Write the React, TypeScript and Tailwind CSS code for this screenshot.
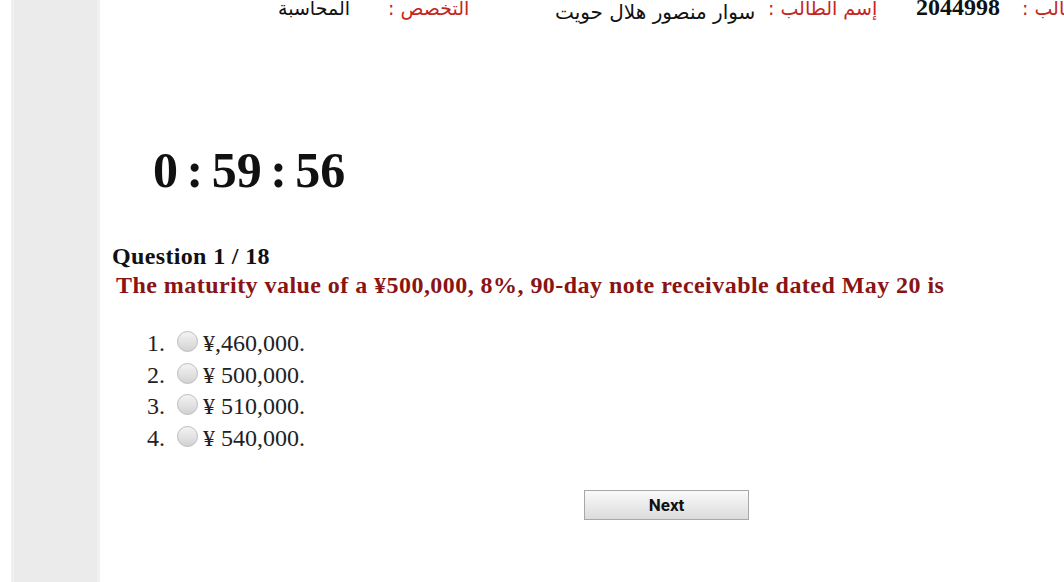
import React from "react";

const serif = "font-['Liberation_Serif','Times_New_Roman',serif]";
const arabic = "font-['DejaVu_Sans','Noto_Sans',sans-serif]";

const options = ["¥,460,000.", "¥ 500,000.", "¥ 510,000.", "¥ 540,000."];

function Radio() {
  return (
    <span className="mt-[3px] block h-[21px] w-[21px] shrink-0 rounded-full border border-[#bcbcbc] bg-linear-to-b from-[#f4f4f4] to-[#d2d2d2]" />
  );
}

export default function App() {
  return (
    <div className="flex h-[582px] w-[1064px] overflow-hidden bg-white">
      <div className="w-[11px] shrink-0 bg-white" />
      <div className="w-[89px] shrink-0 border-x-[3px] border-x-[#f0f0f0] bg-[#ebebeb]" />

      <main className="relative flex-1 overflow-hidden">
        {/* student info row */}
        <div
          dir="rtl"
          className="mr-[-136px] flex h-[30px] items-start whitespace-nowrap text-[20px] leading-none"
        >
          <div className={`w-[178px] shrink-0 text-left text-[19px] text-[#c3261d] ${arabic} -mt-[1px]`}>
            رقم الطالب :
          </div>
          <div className={`w-[106px] shrink-0 text-left text-[24px] font-bold text-[#111] ${serif} -mt-[5px]`}>
            2044998
          </div>
          <div className={`w-[148px] shrink-0 text-left text-[19px] text-[#c3261d] ${arabic} -mt-[1px]`}>
            إسم الطالب :
          </div>
          <div className={`w-[213px] shrink-0 text-left text-[#111] ${arabic} mt-[2px]`}>
            سوار منصور هلال حويت
          </div>
          <div className={`w-[167px] shrink-0 text-left text-[19px] text-[#c3261d] ${arabic} -mt-[1px]`}>
            التخصص :
          </div>
          <div className={`w-[110px] shrink-0 text-left text-[19px] text-[#111] ${arabic} -mt-[1px]`}>
            المحاسبة
          </div>
        </div>

        {/* countdown */}
        <div className={`mt-[115px] pl-[53px] text-[50px] font-bold leading-[50px] text-[#111] [word-spacing:-4px] ${serif}`}>
          0 : 59 : 56
        </div>

        {/* question */}
        <div className={`mt-[47px] ${serif}`}>
          <div className="pl-[12px] text-[24px] font-bold leading-[29px] tracking-[0.35px] text-[#111]">
            Question 1 / 18
          </div>
          <div className="pl-[16px] text-[24px] font-bold leading-[29px] tracking-[0.45px] text-[#8a1414]">
            The maturity value of a ¥500,000, 8%, 90-day note receivable dated May 20 is
          </div>
        </div>

        <ul className={`mt-[28px] ${serif} text-[24px] leading-[31.6px] text-[#222]`}>
          {options.map((opt, i) => (
            <li key={opt} className="flex items-start">
              <span className="w-[65px] shrink-0 text-right">{i + 1}.</span>
              <span className="ml-[12px]">
                <Radio />
              </span>
              <span className="ml-[5px]">{opt}</span>
            </li>
          ))}
        </ul>

        <button
          type="button"
          className="ml-[484px] mt-[36px] flex h-[30px] w-[165px] items-center justify-center border border-[#a8a8a8] bg-linear-to-b from-[#fafafa] to-[#dcdcdc] font-['Roboto','Liberation_Sans',sans-serif] text-[17px] font-bold text-[#111]"
        >
          Next
        </button>
      </main>
    </div>
  );
}
